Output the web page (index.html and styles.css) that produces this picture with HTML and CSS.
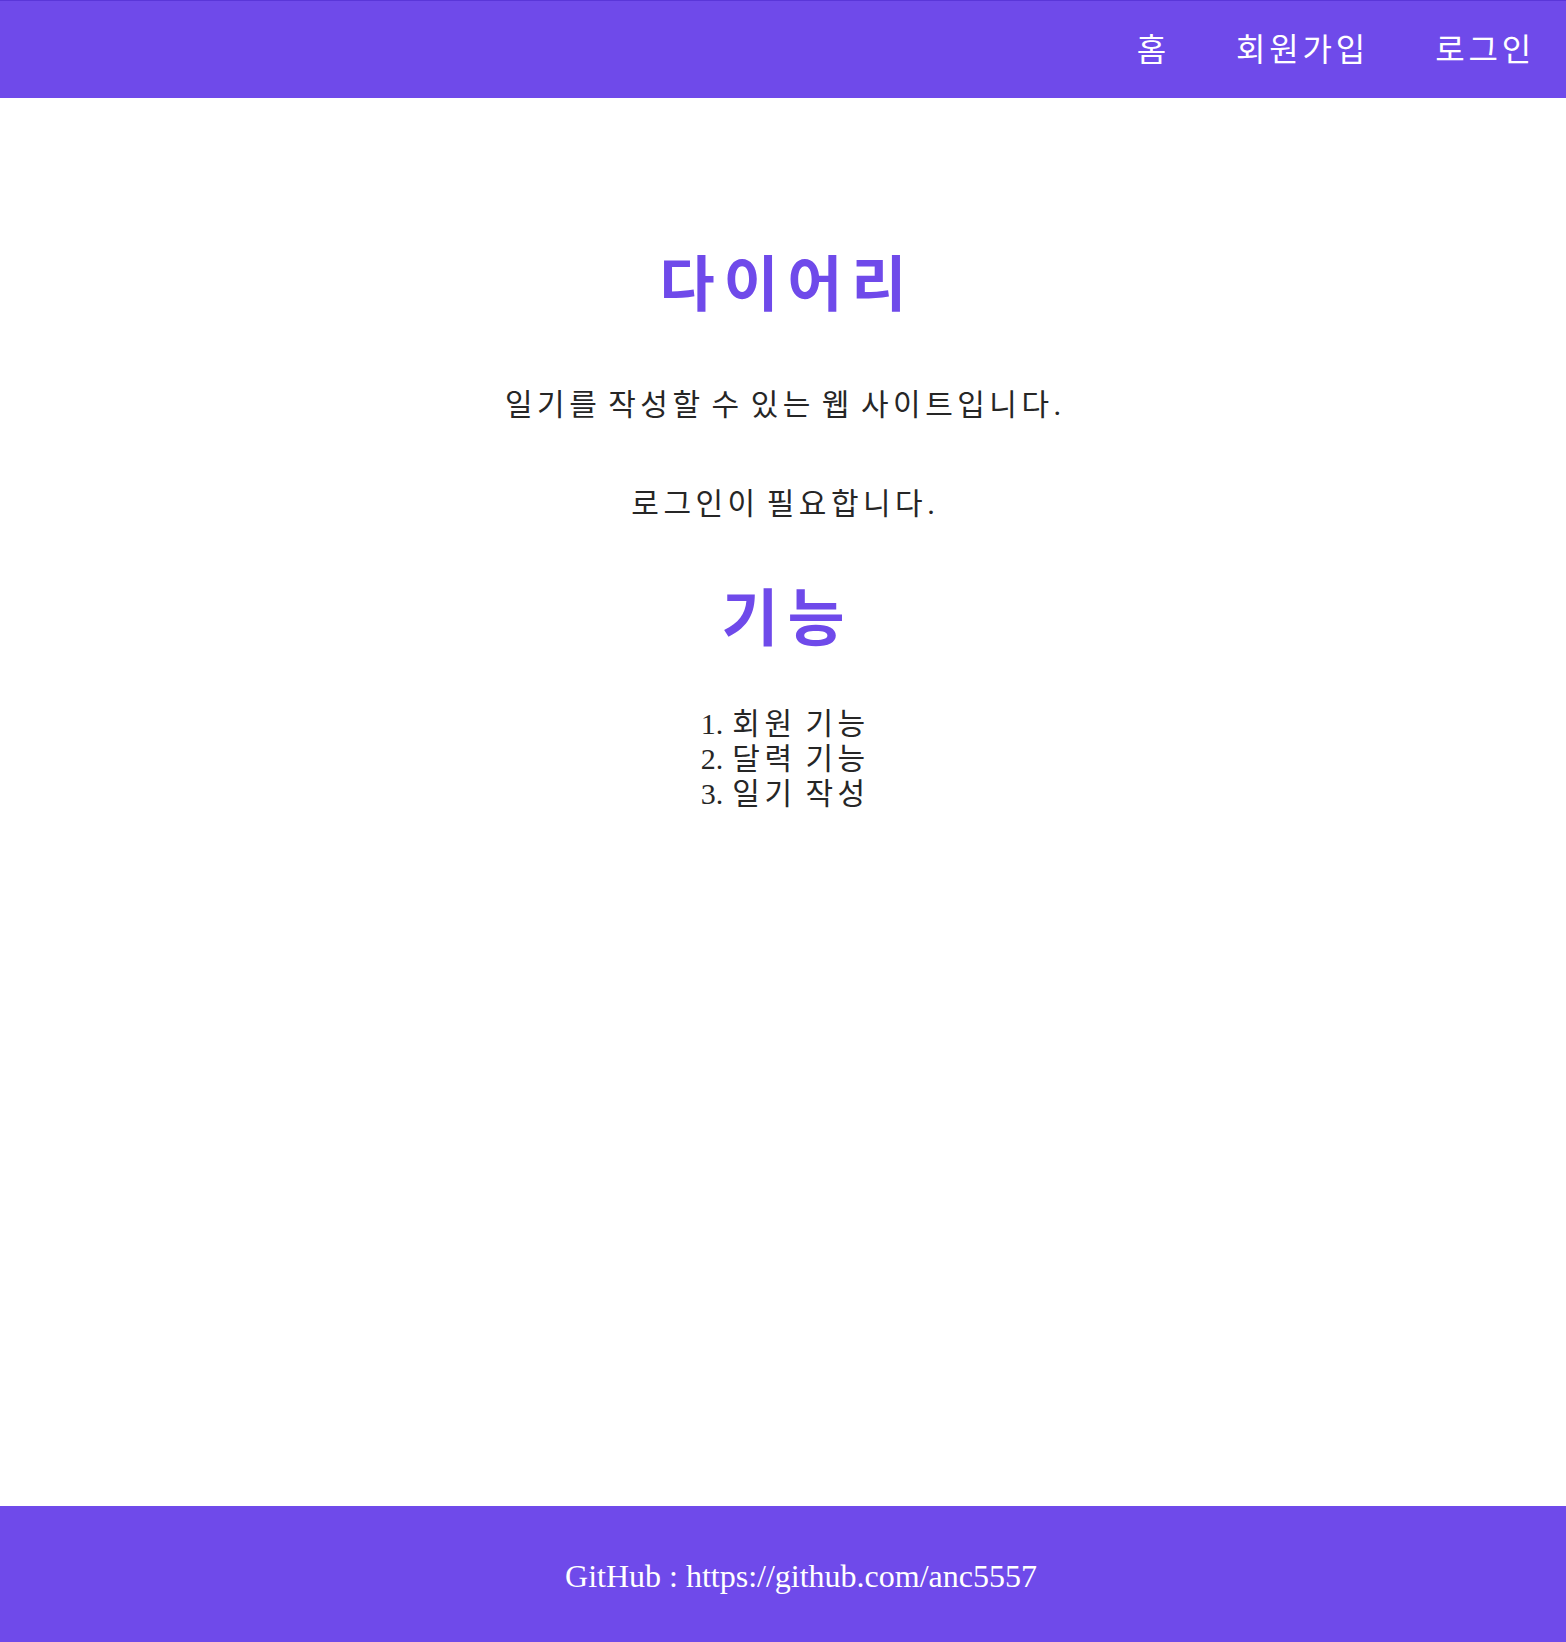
FILE: index.html
```html
<!DOCTYPE html>
<html lang="ko">
<head>
<meta charset="utf-8">
<title>다이어리</title>
<link rel="stylesheet" href="styles.css">
</head>
<body>
<div class="page">
  <header class="topbar">
    <nav class="nav">
      <a class="nav-link" href="#">홈</a>
      <a class="nav-link" href="#">회원가입</a>
      <a class="nav-link" href="#">로그인</a>
    </nav>
  </header>
  <main class="main">
    <h1 class="title">다이어리</h1>
    <p class="text">일기를 작성할 수 있는 웹 사이트입니다.</p>
    <p class="text text-second">로그인이 필요합니다.</p>
    <h2 class="title title-second">기능</h2>
    <ol class="features">
      <li><span class="num">1.</span> 회원 기능</li>
      <li><span class="num">2.</span> 달력 기능</li>
      <li><span class="num">3.</span> 일기 작성</li>
    </ol>
  </main>
  <footer class="footer">
    <p class="footer-text">GitHub : https://github.com/anc5557</p>
  </footer>
</div>
</body>
</html>
```

FILE: styles.css
```css
html, body {
  margin: 0;
  padding: 0;
  background: #ffffff;
}

body {
  font-family: "Liberation Serif", "Noto Sans CJK KR", serif;
  color: #262626;
}

.page {
  min-height: 100vh;
  display: flex;
  flex-direction: column;
}

.topbar {
  height: 97px;
  background: #6f4aea;
  border-top: 1px solid #5a36d8;
  display: flex;
  align-items: center;
  justify-content: flex-end;
  padding-right: 31px;
}

.nav {
  display: flex;
  gap: 66px;
}

.nav-link {
  color: #ffffff;
  text-decoration: none;
  font-size: 32px;
  line-height: 40px;
  letter-spacing: 0.12em;
}

.main {
  flex: 1;
  display: flex;
  flex-direction: column;
  align-items: center;
  padding-top: 152px;
}

.title {
  margin: 0;
  font-size: 60px;
  line-height: 72px;
  font-weight: bold;
  color: #6f4aea;
  letter-spacing: 0.145em;
  padding-left: 0.145em;
}

.title-second {
  margin-top: 63px;
  font-size: 62px;
}

.text {
  margin: 65px 0 0;
  font-size: 30px;
  line-height: 35px;
  letter-spacing: 0.15em;
  word-spacing: -5px;
  padding-left: 0.15em;
}

.text-second {
  margin-top: 64px;
}

.features {
  list-style: none;
  margin: 50px 0 0;
  padding: 0 0 0 0.15em;
  font-size: 30px;
  line-height: 35px;
  text-align: left;
  letter-spacing: 0.15em;
  word-spacing: -3px;
}

.num {
  letter-spacing: 0;
}

.footer {
  height: 136px;
  background: #6f4aea;
  display: flex;
  align-items: center;
  justify-content: center;
  padding-left: 36px;
}

.footer-text {
  margin: 0;
  color: #ffffff;
  font-size: 32px;
  line-height: 40px;
  padding-top: 4px;
}
```
